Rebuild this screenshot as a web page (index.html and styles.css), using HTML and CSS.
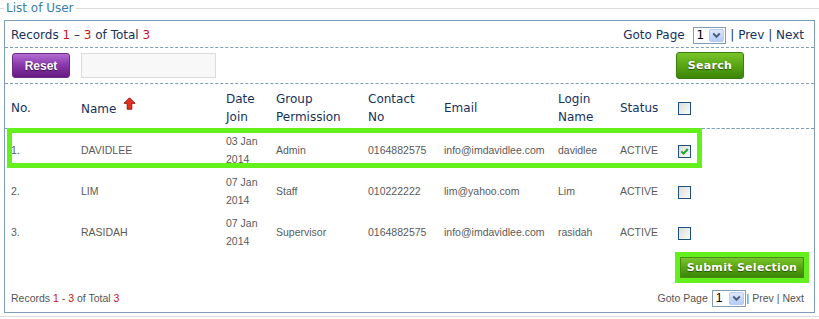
FILE: index.html
```html
<!DOCTYPE html>
<html>
<head>
<meta charset="utf-8">
<link rel="stylesheet" href="styles.css">
</head>
<body>
<fieldset class="panel">
  <legend class="panel-title">List of User</legend>
  <div class="box">
    <div class="pager pager-top">
      <div class="records">Records <span class="num">1</span> – <span class="num">3</span> of Total <span class="num">3</span></div>
      <div class="goto">Goto Page <span class="select"><span class="select-val">1</span><span class="select-btn"><svg width="9" height="7" viewBox="0 0 9 7"><path d="M1.2 1.5 L4.5 4.8 L7.8 1.5" fill="none" stroke="#4d6185" stroke-width="2"/></svg></span></span> | <span class="link">Prev</span> | <span class="link">Next</span></div>
    </div>
    <div class="toolbar">
      <button class="btn btn-purple">Reset</button>
      <input class="search-input" type="text">
      <button class="btn btn-green btn-search">Search</button>
    </div>
    <div class="table-wrap">
      <table class="users">
        <colgroup>
          <col class="c-no"><col class="c-name"><col class="c-date"><col class="c-group"><col class="c-contact"><col class="c-email"><col class="c-login"><col class="c-status"><col class="c-check">
        </colgroup>
        <thead>
          <tr>
            <th>No.</th>
            <th>Name <svg class="sort" width="13" height="13" viewBox="0 0 13 13"><path d="M6.5 0.8 L12 6.3 H8.8 V12.2 H4.2 V6.3 H1 Z" fill="#e4321f" stroke="#9c1810" stroke-width="1" stroke-linejoin="round"/></svg></th>
            <th>Date<br>Join</th>
            <th>Group<br>Permission</th>
            <th>Contact<br>No</th>
            <th>Email</th>
            <th>Login<br>Name</th>
            <th>Status</th>
            <th><span class="chk"></span></th>
          </tr>
        </thead>
        <tbody>
          <tr>
            <td>1.</td><td>DAVIDLEE</td><td>03 Jan<br>2014</td><td>Admin</td><td>0164882575</td><td>info@imdavidlee.com</td><td>davidlee</td><td>ACTIVE</td>
            <td><span class="chk"><svg width="11" height="11" viewBox="0 0 11 11"><path d="M2.3 5.4 L4.5 7.6 L8.8 3" fill="none" stroke="#22a52a" stroke-width="2"/></svg></span></td>
          </tr>
          <tr>
            <td>2.</td><td>LIM</td><td>07 Jan<br>2014</td><td>Staff</td><td>010222222</td><td>lim@yahoo.com</td><td>Lim</td><td>ACTIVE</td>
            <td><span class="chk"></span></td>
          </tr>
          <tr>
            <td>3.</td><td>RASIDAH</td><td>07 Jan<br>2014</td><td>Supervisor</td><td>0164882575</td><td>info@imdavidlee.com</td><td>rasidah</td><td>ACTIVE</td>
            <td><span class="chk"></span></td>
          </tr>
        </tbody>
      </table>
      <div class="mark mark-row"></div>
    </div>
    <div class="actions">
      <span class="mark-box"><button class="btn btn-green btn-submit">Submit Selection</button></span>
    </div>
    <div class="pager pager-bottom">
      <div class="records">Records <span class="num">1</span> - <span class="num">3</span> of Total <span class="num">3</span></div>
      <div class="goto">Goto Page <span class="select select-sm"><span class="select-val">1</span><span class="select-btn"><svg width="9" height="7" viewBox="0 0 9 7"><path d="M1.2 1.5 L4.5 4.8 L7.8 1.5" fill="none" stroke="#4d6185" stroke-width="2"/></svg></span></span> | <span class="link">Prev</span> | <span class="link">Next</span></div>
    </div>
  </div>
</fieldset>
</body>
</html>
```

FILE: styles.css
```css
* { box-sizing: border-box; }
html, body { margin: 0; background: #fff; }
body {
  font-family: "DejaVu Sans", Verdana, sans-serif;
  font-size: 12px;
  color: #16325c;
}

.panel {
  margin: 0;
  padding: 4px 4px 3px 4px;
  border: 0;
  border-top: 1px solid #dcdcdc;
  border-bottom: 1px solid #dcdcdc;
  min-width: 0;
}
.panel-title {
  padding: 0 2px;
  font-size: 12px;
  line-height: 16px;
  color: #3b7ea8;
}

.box {
  border: 1px solid #7f9db9;
}

.pager {
  display: flex;
  justify-content: space-between;
  align-items: center;
}
.pager-top {
  height: 27px;
  padding: 2px 10px 0 6px;
  border-bottom: 1px dashed #7da1b3;
}
.num { color: #c8151b; }
.goto { display: flex; align-items: center; white-space: pre; }

.select {
  display: inline-flex;
  align-items: center;
  justify-content: space-between;
  width: 33px;
  height: 17px;
  margin: 0 1px 0 4px;
  border: 1px solid #7f9db9;
  background: #fff;
  padding: 0 1px 0 3px;
  color: #000;
  font-size: 12px;
  line-height: 15px;
}
.select-btn {
  display: inline-flex;
  align-items: center;
  justify-content: center;
  width: 15px;
  height: 13px;
  border: 1px solid #b7caf3;
  border-radius: 2px;
  background: linear-gradient(#dfe8fd, #b5cbf7);
}

.toolbar {
  display: flex;
  align-items: center;
  height: 36px;
  padding-left: 7px;
  border-bottom: 1px dashed #7da1b3;
}
.btn {
  border: 0;
  padding: 0;
  color: #fff;
  cursor: pointer;
}
.btn-purple {
  width: 58px;
  height: 25px;
  margin-right: 11px;
  border-radius: 3px;
  border: 1px solid #6b2a86;
  background: linear-gradient(#b36dd2 0%, #8c3aae 45%, #64197e 100%);
  font: bold 12px "Liberation Sans", Arial, sans-serif;
  text-shadow: 0 1px 1px #3b0c4c;
}
.search-input {
  width: 135px;
  height: 25px;
  margin: 0;
  border: 1px solid #dcdcdc;
  background: #f8f8f8;
}
.btn-green {
  border-radius: 3px;
  border: 1px solid #3d7c10;
  background: linear-gradient(#78c52a 0%, #58a514 50%, #3b8505 100%);
  font: bold 11px "DejaVu Sans", Verdana, sans-serif;
  letter-spacing: 0.3px;
  text-shadow: 0 1px 1px #244d05;
}
.btn-search {
  width: 68px;
  height: 27px;
  margin-left: auto;
  margin-right: 70px;
}

.table-wrap { position: relative; }
.users {
  width: 100%;
  border-collapse: collapse;
  table-layout: fixed;
}
.c-no { width: 70px; }
.c-name { width: 145px; }
.c-date { width: 50px; }
.c-group { width: 92px; }
.c-contact { width: 76px; }
.c-email { width: 114px; }
.c-login { width: 62px; }
.c-status { width: 58px; }

.users th {
  height: 44px;
  padding: 4px 0 0 6px;
  text-align: left;
  font-weight: normal;
  font-size: 12px;
  line-height: 18px;
  color: #16325c;
  vertical-align: middle;
  border-bottom: 1px dashed #7da1b3;
  white-space: nowrap;
}
.users td {
  height: 41px;
  padding: 3px 0 0 6px;
  font-family: "Liberation Sans", Arial, sans-serif;
  font-size: 10.5px;
  line-height: 18px;
  color: #5a5a5a;
  vertical-align: middle;
}
.sort { vertical-align: 3px; margin-left: 3px; }

.chk {
  display: inline-flex;
  align-items: center;
  justify-content: center;
  width: 13px;
  height: 13px;
  border: 1px solid #1c5180;
  background: linear-gradient(135deg, #dcdcd7, #fbfbfa);
  vertical-align: middle;
}

.mark {
  position: absolute;
  border: 5px solid #63f01c;
}
.mark-row {
  left: 2px;
  top: 44px;
  width: 695px;
  height: 40px;
}

.actions {
  display: flex;
  justify-content: flex-end;
  margin-top: 1px;
  padding-right: 5px;
}
.mark-box {
  display: inline-flex;
  border: 5px solid #63f01c;
}
.btn-submit {
  width: 124px;
  height: 21px;
  border-radius: 0;
  border-color: #4b8a19;
}

.pager-bottom {
  height: 29px;
  padding: 1px 10px 0 6px;
  font-family: "Liberation Sans", Arial, sans-serif;
  font-size: 10.5px;
  color: #555;
}
.select-sm { width: 34px; margin: 0 -2px 0 1px; }
```
